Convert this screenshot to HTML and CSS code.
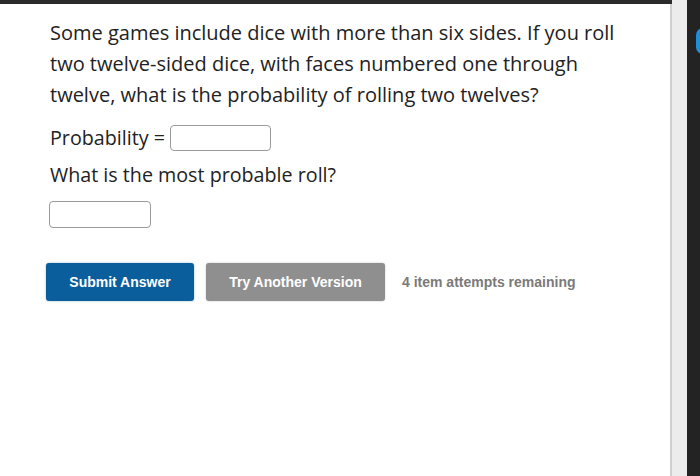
FILE: index.html
```html
<!DOCTYPE html>
<html>
<head>
<meta charset="utf-8">
<link rel="stylesheet" href="styles.css">
</head>
<body>
<div class="frame">
  <div class="page">
    <div class="topbar"></div>
    <div class="content">
      <p class="question">Some games include dice with more than six sides. If you roll two twelve-sided dice, with faces numbered one through twelve, what is the probability of rolling two twelves?</p>
      <div class="row">
        <span class="label">Probability =</span>
        <span class="input input-a"></span>
      </div>
      <p class="label q2">What is the most probable roll?</p>
      <span class="input input-b"></span>
      <div class="actions">
        <button class="btn btn-primary">Submit Answer</button>
        <button class="btn btn-secondary">Try Another Version</button>
        <span class="attempts">4 item attempts remaining</span>
      </div>
    </div>
  </div>
  <div class="track"></div>
  <div class="side">
    <div class="side-arc"></div>
  </div>
</div>
</body>
</html>
```
FILE: styles.css
```css
html, body {
  margin: 0;
  padding: 0;
  background: #ffffff;
}
.frame {
  display: flex;
  width: 700px;
  height: 476px;
  overflow: hidden;
}
.page {
  width: 670px;
  border-right: 2px solid #cfcfcf;
  background: #ffffff;
  display: flex;
  flex-direction: column;
}
.topbar {
  height: 4px;
  background: #2b2b2b;
  margin-right: -3px;
}
.content {
  padding: 13px 0 0 50px;
  font-family: "Open Sans", sans-serif;
  color: #222222;
}
.question {
  margin: 0;
  font-size: 20px;
  line-height: 31px;
  width: 580px;
}
.row {
  display: flex;
  align-items: center;
  margin-top: 14px;
  height: 27px;
}
.label {
  font-size: 19.7px;
  margin-right: 5px;
}
.input {
  display: block;
  box-sizing: border-box;
  border: 1px solid #9a9a9a;
  border-radius: 4px;
  background: #fff;
}
.input-a {
  width: 101px;
  height: 26px;
}
.q2 {
  margin: 10px 0 0 0;
  line-height: 28px;
}
.input-b {
  width: 102px;
  height: 27px;
  margin-top: 12px;
  margin-left: -1px;
}
.actions {
  display: flex;
  align-items: center;
  margin-top: 35px;
  margin-left: -4px;
  font-family: "Liberation Sans", Arial, sans-serif;
}
.btn {
  height: 38px;
  border: none;
  border-radius: 3px;
  color: #ffffff;
  font-family: "Liberation Sans", Arial, sans-serif;
  font-weight: bold;
  font-size: 14px;
  padding: 0;
}
.btn-primary {
  width: 148px;
  background: #0b5e9c;
  box-shadow: 0 0 2px rgba(11, 94, 156, 0.5);
}
.btn-secondary {
  width: 179px;
  margin-left: 12px;
  background: #8f8f8f;
  box-shadow: 0 0 2px rgba(0, 0, 0, 0.25);
}
.attempts {
  margin-left: 17px;
  font-size: 14px;
  font-weight: bold;
  color: #7a7a7a;
}
.track {
  width: 15px;
  background: #ececec;
}
.side {
  flex: 1;
  background: #232323;
  position: relative;
}
.side-arc {
  position: absolute;
  left: 9px;
  top: 28px;
  width: 14px;
  height: 26px;
  border-radius: 8px;
  background: #1e8ed6;
}
```
